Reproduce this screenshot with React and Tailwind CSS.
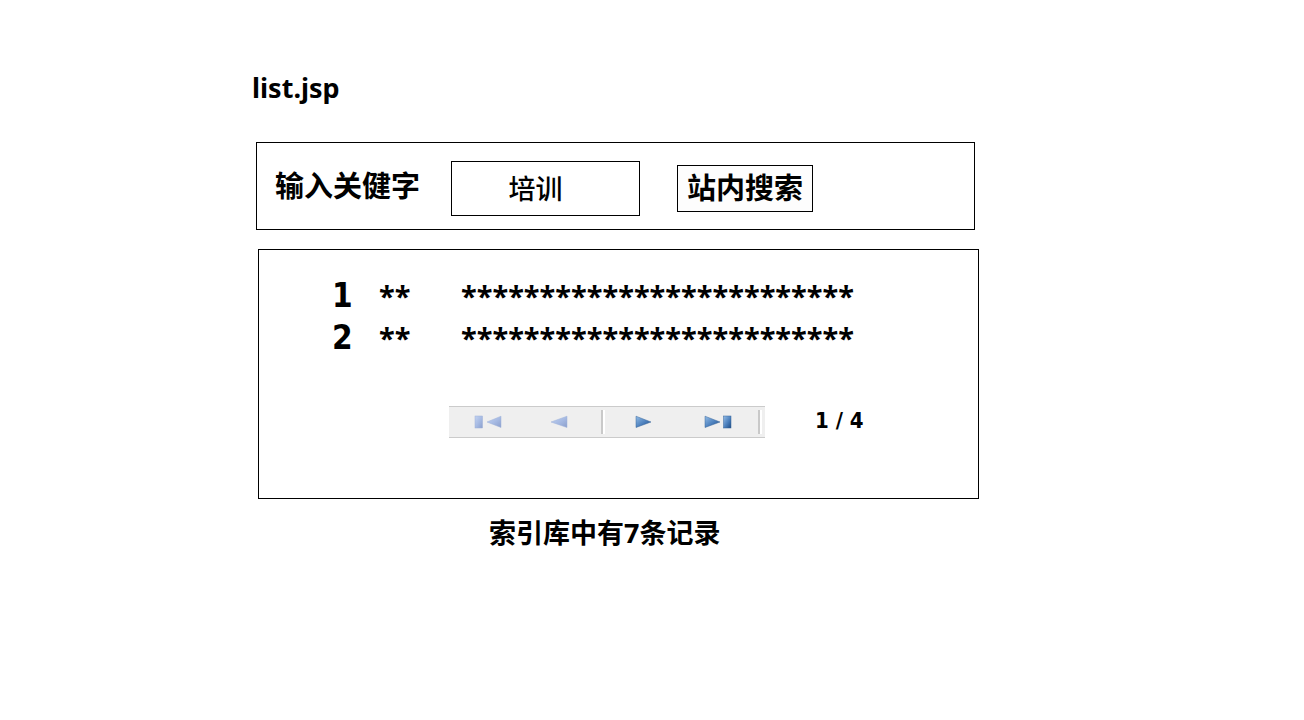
const results = [
  { id: 1, title: '**', summary: '*************************' },
  { id: 2, title: '**', summary: '*************************' },
];

function PagerIcon({ direction, edge, muted }) {
  const id = `pager-${direction}-${edge ? 'edge' : 'step'}`;
  const outline = muted ? '#9db0d8' : '#37659b';
  return (
    <svg width="28" height="14" viewBox="0 0 28 14" aria-hidden="true">
      <defs>
        <linearGradient id={id} x1="0" y1="0" x2="1" y2="1">
          <stop offset="0" stopColor={muted ? '#c3d3f2' : '#93bce6'} />
          <stop offset="0.55" stopColor={muted ? '#a5b9e2' : '#4c80bd'} />
          <stop offset="1" stopColor={muted ? '#8b9fcc' : '#204c83'} />
        </linearGradient>
      </defs>
      <g fill={`url(#${id})`} stroke={outline} strokeWidth="0.5">
        {direction === 'back' ? (
          <>
            {edge && <rect x="1" y="1" width="7.5" height="12" />}
            <path d={edge ? 'M13 7 27 1.2V12.5Z' : 'M2 7 18 1.2V12.5Z'} />
          </>
        ) : (
          <>
            <path d={edge ? 'M1 1.2 16 7 1 12.5Z' : 'M7 1.2 22 7 7 12.5Z'} />
            {edge && <rect x="19.5" y="1" width="7.5" height="12" />}
          </>
        )}
      </g>
    </svg>
  );
}

function Divider() {
  return <span className="h-6 w-1 border-l-2 border-r-2 border-l-[#c9c9c9] border-r-white" />;
}

export default function App() {
  return (
    <main className="min-h-screen bg-white pt-16 pr-[325px] pb-8 pl-64 font-['Noto_Sans','Noto_Sans_CJK_SC',sans-serif] text-black">
      <h1 className="-ml-1 pt-px text-[27px] leading-[45px] font-bold">list.jsp</h1>

      <form
        className="mt-8 mr-1 flex h-[88px] items-center border border-black pl-[18px]"
        onSubmit={(event) => event.preventDefault()}
      >
        <label htmlFor="keyword" className="shrink-0 text-[29px] leading-10 font-bold">
          输入关健字
        </label>
        <input
          id="keyword"
          type="text"
          defaultValue="培训"
          className="mt-1 ml-[31px] h-[55px] w-[189px] shrink-0 border border-black bg-white pr-5 pb-0.5 text-center text-[27px] font-medium outline-none"
        />
        <button
          type="submit"
          className="mt-1 ml-[37px] h-[47px] w-[136px] shrink-0 border border-black bg-[#fdfdfd] text-center text-[29px] leading-10 font-bold"
        >
          站内搜索
        </button>
      </form>

      <section className="mt-[19px] ml-0.5 h-[250px] border border-black pt-[25px]">
        <table className="ml-[73px] text-left font-bold">
          <tbody>
            {results.map((item) => (
              <tr key={item.id} className="h-[42px]">
                <td className="w-[47px] p-0 font-['DejaVu_Sans_Condensed','DejaVu_Sans',sans-serif] text-[33px] leading-[42px]">
                  {item.id}
                </td>
                <td className="w-[82px] p-0 text-[29px] leading-[34px]">{item.title}</td>
                <td className="p-0 text-[29px] leading-[34px]">{item.summary}</td>
              </tr>
            ))}
          </tbody>
        </table>

        <div className="mt-[47px] flex items-center pl-[190px]">
          <nav
            aria-label="分页"
            className="flex h-8 w-[316px] shrink-0 items-center border-y border-[#cbcbcb] bg-[#efefef] pl-[25px]"
          >
            <button type="button" aria-label="首页" className="w-[75px]">
              <PagerIcon direction="back" edge muted />
            </button>
            <button type="button" aria-label="上一页" className="w-[52px]">
              <PagerIcon direction="back" muted />
            </button>
            <Divider />
            <button type="button" aria-label="下一页" className="w-[75px] pl-6">
              <PagerIcon direction="forward" />
            </button>
            <button type="button" aria-label="末页" className="w-[78px] pl-6">
              <PagerIcon direction="forward" edge />
            </button>
            <Divider />
          </nav>
          <span className="ml-[50px] pb-0.5 font-['DejaVu_Sans_Condensed','DejaVu_Sans',sans-serif] text-[22px] leading-6 font-bold whitespace-nowrap">
            1 / 4
          </span>
        </div>
      </section>

      <p className="mt-3.5 pl-[233px] text-[27px] leading-10 font-bold">索引库中有7条记录</p>
    </main>
  );
}
